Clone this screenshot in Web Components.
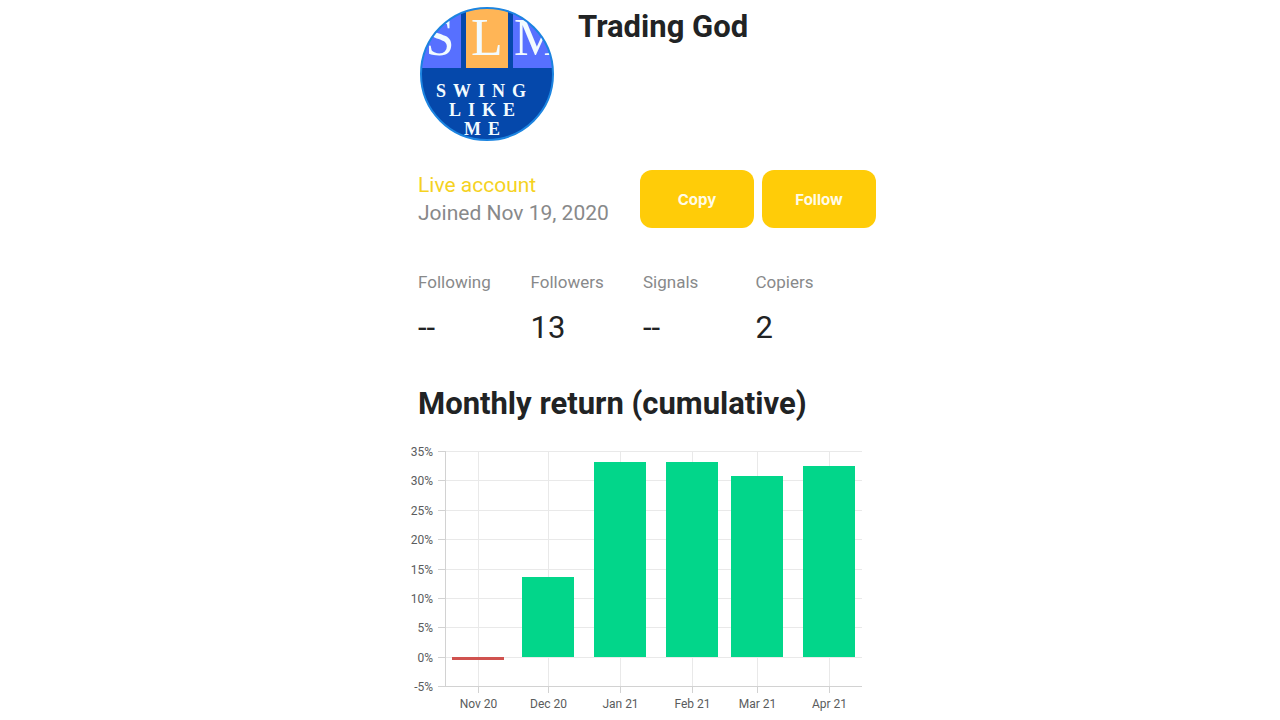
<!DOCTYPE html>
<html lang="en">
<head>
<meta charset="utf-8">
<meta name="viewport" content="width=device-width, initial-scale=1">
<title>Trading God</title>
<style>
    body{
        margin: 0;
        background-color: #fff;
        color: #212324;
        font-family: Roboto, sans-serif;
    }
</style>
</head>
<body>
<trader-profile name="Trading God">
    <swing-avatar slot="avatar"></swing-avatar>
    <account-info slot="account" joined="Nov 19, 2020">Live account</account-info>
    <action-button slot="actions">Copy</action-button>
    <action-button slot="actions">Follow</action-button>
    <stat-item slot="stats" label="Following">--</stat-item>
    <stat-item slot="stats" label="Followers">13</stat-item>
    <stat-item slot="stats" label="Signals">--</stat-item>
    <stat-item slot="stats" label="Copiers">2</stat-item>
    <return-chart heading="Monthly return (cumulative)"></return-chart>
</trader-profile>

<script>
class BaseElement extends HTMLElement {
    constructor() {
        super()
        this.template = document.createElement('template');
        this.template.innerHTML = this.markup();
        this.shadow = this.attachShadow({ mode: 'open' });
        this.shadow.appendChild(this.template.content.cloneNode(true));
    }
    connectedCallback() {
        this.render();
    }
    render() {}
}

class TraderProfile extends BaseElement {
    markup() {
        return `
<style>
    :host{
        display: block;
        box-sizing: border-box;
        max-width: 472px;
        margin: 0 auto;
        padding-top: 6px;
    }
    header, .account-cont, .stats-cont{
        margin-left: 14px;
    }
    header{
        display: flex;
        gap: 24px;
    }
    h1{
        margin: 0;
        padding-top: 3px;
        font-size: 31px;
        line-height: 36px;
        font-weight: 700;
    }
    .account-cont{
        display: flex;
        justify-content: space-between;
        align-items: center;
        margin-top: 28px;
    }
    .actions-cont{
        display: flex;
        gap: 8px;
    }
    .stats-cont{
        display: grid;
        grid-template-columns: repeat(4, 1fr);
        margin-top: 40px;
        padding-right: 8px;
    }
</style>
<header>
    <slot name="avatar"></slot>
    <h1></h1>
</header>
<div class="account-cont">
    <slot name="account"></slot>
    <div class="actions-cont"><slot name="actions"></slot></div>
</div>
<div class="stats-cont"><slot name="stats"></slot></div>
<slot></slot>`;
    }
    render() {
        this.shadow.querySelector('h1').textContent = this.getAttribute('name');
    }
}

class SwingAvatar extends BaseElement {
    markup() {
        return `
<style>
    :host{
        display: block;
        flex: none;
        width: 136px;
        height: 136px;
    }
    svg{
        display: block;
    }
    text{
        font-family: "Liberation Serif", serif;
        fill: #f2fbff;
    }
    .initial{
        font-size: 52px;
        text-anchor: middle;
    }
    .word{
        font-size: 18px;
        font-weight: 700;
        letter-spacing: 7px;
    }
</style>
<svg width="136" height="136" viewBox="0 0 136 136" role="img" aria-label="Swing Like Me">
    <clipPath id="round"><circle cx="69" cy="68" r="66"/></clipPath>
    <g clip-path="url(#round)">
        <rect width="136" height="136" fill="#0548ab"/>
        <rect width="43" height="62" fill="#5770ff"/>
        <rect x="48" width="42" height="62" fill="#ffb556"/>
        <rect x="95" width="42" height="62" fill="#5770ff"/>
        <text class="initial" x="22" y="49">S</text>
        <text class="initial" x="69" y="49">L</text>
        <text class="initial" x="119" y="49">M</text>
        <text class="word" x="18" y="91">SWING</text>
        <text class="word" x="31" y="110">LIKE</text>
        <text class="word" x="46" y="129">ME</text>
    </g>
    <circle cx="69" cy="68" r="66" fill="none" stroke="#1c84e0" stroke-width="2"/>
</svg>`;
    }
}

class AccountInfo extends BaseElement {
    markup() {
        return `
<style>
    :host{
        display: block;
        font-size: 21px;
        line-height: 28px;
    }
    p{
        margin: 0;
    }
    .type{
        color: #f5d21f;
    }
    .joined{
        color: #88898a;
    }
</style>
<p class="type"><slot></slot></p>
<p class="joined"></p>`;
    }
    render() {
        this.shadow.querySelector('.joined').textContent = 'Joined ' + this.getAttribute('joined');
    }
}

class ActionButton extends BaseElement {
    markup() {
        return `
<style>
    :host{
        display: block;
    }
    button{
        display: block;
        width: 114px;
        height: 58px;
        padding: 0;
        border: none;
        border-radius: 12px;
        background-color: #ffcc08;
        color: #fffbe8;
        font-family: Inter, sans-serif;
        font-size: 15px;
        font-weight: 700;
        cursor: pointer;
    }
    button:hover{
        background-color: #f5c200;
    }
</style>
<button type="button"><slot></slot></button>`;
    }
}

class StatItem extends BaseElement {
    markup() {
        return `
<style>
    :host{
        display: block;
    }
    p{
        margin: 0;
    }
    .label{
        color: #88898a;
        font-size: 17px;
        line-height: 28px;
    }
    .value{
        margin-top: 14px;
        font-size: 31px;
        line-height: 36px;
    }
</style>
<p class="label"></p>
<p class="value"><slot></slot></p>`;
    }
    render() {
        this.shadow.querySelector('.label').textContent = this.getAttribute('label');
    }
}

const returns = [
    { label: 'Nov 20', date: '2020-11-01', value: -0.5 },
    { label: 'Dec 20', date: '2020-12-01', value: 13.6 },
    { label: 'Jan 21', date: '2021-01-01', value: 33.2 },
    { label: 'Feb 21', date: '2021-02-01', value: 33.2 },
    { label: 'Mar 21', date: '2021-03-01', value: 30.8 },
    { label: 'Apr 21', date: '2021-04-01', value: 32.5 }
];

class ReturnChart extends BaseElement {
    markup() {
        return `
<style>
    :host{
        display: block;
        margin-top: 40px;
    }
    h2{
        margin: 0 0 0 14px;
        font-size: 31px;
        line-height: 36px;
        font-weight: 700;
    }
    svg{
        display: block;
        width: 100%;
        margin-top: 18px;
    }
    text{
        font-size: 12px;
        fill: #5a5c5d;
    }
    .y-label{
        text-anchor: end;
    }
    .x-label{
        text-anchor: middle;
    }
    .grid{
        stroke: #e9e9e9;
    }
    .axis{
        stroke: #d2d2d2;
    }
    .up{
        fill: #02d68a;
    }
    .down{
        fill: #d0524f;
    }
</style>
<h2></h2>
<svg viewBox="0 0 472 278" role="img" aria-label="Monthly return chart"></svg>`;
    }
    render() {
        this.shadow.querySelector('h2').textContent = this.getAttribute('heading');

        const left = 41, right = 458, top = 11, bottom = 246;
        const barWidth = 52;
        const start = Date.parse(returns[0].date);
        // months sit on a time scale, so the bars are not evenly spaced
        const x = date => Math.round(74 + (Date.parse(date) - start) / 86400000 * 2.325) + .5;
        const y = value => Math.round(bottom - (value + 5) / 40 * (bottom - top));
        const line = (x1, y1, x2, y2, name) => `<line class="${name}" x1="${x1}" y1="${y1}" x2="${x2}" y2="${y2}"/>`;

        let out = '';
        for(let value = -5; value <= 35; value += 5){
            const pos = y(value) + .5;
            out += line(left, pos, right, pos, value === -5 ? 'axis' : 'grid');
            out += line(left - 7, pos, left, pos, 'axis');
            out += `<text class="y-label" x="29" y="${y(value) + 5}">${value}%</text>`;
        }
        returns.forEach(item => {
            const pos = x(item.date);
            out += line(pos, top, pos, bottom, 'grid');
            out += line(pos, bottom, pos, bottom + 7, 'axis');
            out += `<text class="x-label" x="${pos}" y="268">${item.label}</text>`;
        });
        out += line(left + .5, top, left + .5, bottom, 'axis');
        returns.forEach(item => {
            const from = y(Math.max(item.value, 0));
            const to = y(Math.min(item.value, 0));
            out += `<rect class="${item.value < 0 ? 'down' : 'up'}" x="${x(item.date) - barWidth / 2 - .5}" y="${from}" width="${barWidth}" height="${to - from}"/>`;
        });
        this.shadow.querySelector('svg').innerHTML = out;
    }
}

window.customElements.define('trader-profile', TraderProfile);
window.customElements.define('swing-avatar', SwingAvatar);
window.customElements.define('account-info', AccountInfo);
window.customElements.define('action-button', ActionButton);
window.customElements.define('stat-item', StatItem);
window.customElements.define('return-chart', ReturnChart);
</script>
</body>
</html>
